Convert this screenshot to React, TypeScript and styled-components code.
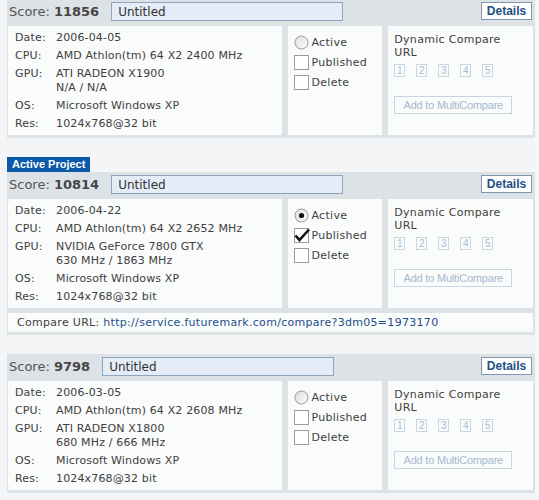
import React from 'react'
import styled, { createGlobalStyle } from 'styled-components'

const GlobalStyle = createGlobalStyle`
  html, body {
    margin: 0;
    padding: 0;
    background: #f3f5f6;
  }
`

const Page = styled.div`
  padding: 0 0 0 7px;
  margin-top: -1px;
  font-family: 'DejaVu Sans', Verdana, sans-serif;
  font-size: 11px;
  letter-spacing: 0.15px;
  color: #404040;
`

const Block = styled.section`
  margin-bottom: 19px;
`

const Tab = styled.div`
  display: inline-block;
  height: 15px;
  line-height: 15px;
  padding: 0 5px;
  background: #0b5aa9;
  color: #fff;
  font-family: 'Liberation Sans', Arial, sans-serif;
  font-weight: bold;
  font-size: 11px;
  letter-spacing: 0;
  vertical-align: top;
`

const Panel = styled.div`
  width: 528px;
  box-sizing: border-box;
  background: #dde2e6;
  padding: 0 2px 3px 1px;
`

const Header = styled.div`
  display: flex;
  align-items: flex-start;
  height: 27px;
  padding: 3px 0 0 1px;
  box-sizing: border-box;
`

const Score = styled.div`
  font-size: 13px;
  line-height: 20px;
  letter-spacing: 0;
  color: #555;
  white-space: nowrap;
  b {
    color: #464646;
  }
`

const Title = styled.input`
  margin-left: 12px;
  width: 232px;
  height: 19px;
  box-sizing: border-box;
  border: 1px solid #8fa5bc;
  background: #e4edf7;
  padding: 0 6px;
  font-family: 'DejaVu Sans', Verdana, sans-serif;
  font-size: 12px;
  color: #333;
  outline: none;
`

const DetailsButton = styled.button`
  margin-left: auto;
  margin-right: 1px;
  width: 51px;
  height: 18px;
  padding: 0;
  background: #fff;
  border: 1px solid #7e97b1;
  color: #1e4f86;
  font-family: 'Liberation Sans', Arial, sans-serif;
  font-weight: bold;
  font-size: 12px;
  cursor: pointer;
`

const Cells = styled.div`
  display: flex;
  gap: 6px;
`

const Cell = styled.div<{ $w: number }>`
  width: ${p => p.$w}px;
  box-sizing: border-box;
  background: #fafbfb;
`

const Specs = styled(Cell)`
  padding: 5px 0 4px 7px;
`

const SpecRow = styled.div`
  display: flex;
  line-height: 14px;
  margin-bottom: 4px;
  &:last-child {
    margin-bottom: 0;
  }
`

const SpecLabel = styled.span`
  width: 41px;
  flex-shrink: 0;
`

const Flags = styled(Cell)`
  padding: 6px 0 0 6px;
`

const Flag = styled.label`
  display: flex;
  align-items: center;
  height: 20px;
  gap: 2px;
  letter-spacing: 0.3px;
`

const Compare = styled(Cell)`
  padding: 7px 0 0 6px;
`

const CompareTitle = styled.div`
  line-height: 13px;
  letter-spacing: 0.3px;
`

const Slots = styled.div`
  display: flex;
  gap: 11px;
  margin-top: 5px;
`

const Slot = styled.span`
  width: 11px;
  height: 13px;
  box-sizing: border-box;
  border: 1px solid #cdd6df;
  color: #a9bfd5;
  font-family: 'Liberation Sans', Arial, sans-serif;
  font-size: 10px;
  line-height: 11px;
  text-align: center;
`

const MultiButton = styled.button`
  margin-top: 19px;
  width: 118px;
  height: 18px;
  padding: 0;
  background: #fafbfb;
  border: 1px solid #cbd4de;
  color: #a4bad1;
  font-family: 'Liberation Sans', Arial, sans-serif;
  font-size: 11px;
  letter-spacing: -0.2px;
`

const UrlRow = styled.div`
  margin-top: 5px;
  height: 19px;
  line-height: 19px;
  padding-left: 9px;
  background: #fafbfb;
  font-size: 11px;
  letter-spacing: 0.3px;
  a {
    color: #1c4f8c;
    text-decoration: none;
  }
`

const Radio = ({ on }: { on: boolean }) => (
  <svg width="15" height="15" viewBox="0 0 15 15">
    <defs>
      <linearGradient id="rg" x1="0" y1="0" x2="1" y2="1">
        <stop offset="0" stopColor="#dcdcdc" />
        <stop offset="1" stopColor="#ffffff" />
      </linearGradient>
    </defs>
    <circle cx="7.5" cy="7.5" r="6.5" fill="url(#rg)" stroke="#9c9c9c" />
    {on && <circle cx="7.5" cy="7.5" r="2.6" fill="#111" />}
  </svg>
)

const Check = ({ on }: { on: boolean }) => (
  <svg width="15" height="15" viewBox="0 0 15 15" style={{ overflow: 'visible' }}>
    <rect x="0.5" y="0.5" width="14" height="14" fill="#fff" stroke="#9c9c9c" />
    {on && (
      <path d="M1.5 7.5 L5.5 12 L15 1.5" fill="none" stroke="#111" strokeWidth="2.6" />
    )}
  </svg>
)

interface Project {
  score: string
  date: string
  cpu: string
  gpu: string
  clocks: string
  active?: boolean
  published?: boolean
  url?: string
}

const projects: Project[] = [
  {
    score: '11856',
    date: '2006-04-05',
    cpu: 'AMD Athlon(tm) 64 X2 2400 MHz',
    gpu: 'ATI RADEON X1900',
    clocks: 'N/A / N/A',
  },
  {
    score: '10814',
    date: '2006-04-22',
    cpu: 'AMD Athlon(tm) 64 X2 2652 MHz',
    gpu: 'NVIDIA GeForce 7800 GTX',
    clocks: '630 MHz / 1863 MHz',
    active: true,
    published: true,
    url: 'http://service.futuremark.com/compare?3dm05=1973170',
  },
  {
    score: '9798',
    date: '2006-03-05',
    cpu: 'AMD Athlon(tm) 64 X2 2608 MHz',
    gpu: 'ATI RADEON X1800',
    clocks: '680 MHz / 666 MHz',
  },
]

const ProjectPanel = ({ p }: { p: Project }) => (
  <Block>
    {p.active && <Tab>Active Project</Tab>}
    <Panel>
      <Header>
        <Score>
          Score: <b>{p.score}</b>
        </Score>
        <Title defaultValue="Untitled" />
        <DetailsButton>Details</DetailsButton>
      </Header>
      <Cells>
        <Specs $w={275}>
          <SpecRow>
            <SpecLabel>Date:</SpecLabel>
            {p.date}
          </SpecRow>
          <SpecRow>
            <SpecLabel>CPU:</SpecLabel>
            {p.cpu}
          </SpecRow>
          <SpecRow>
            <SpecLabel>GPU:</SpecLabel>
            <span>
              {p.gpu}
              <br />
              {p.clocks}
            </span>
          </SpecRow>
          <SpecRow>
            <SpecLabel>OS:</SpecLabel>
            Microsoft Windows XP
          </SpecRow>
          <SpecRow>
            <SpecLabel>Res:</SpecLabel>
            1024x768@32 bit
          </SpecRow>
        </Specs>
        <Flags $w={94}>
          <Flag>
            <Radio on={!!p.active} />
            Active
          </Flag>
          <Flag>
            <Check on={!!p.published} />
            Published
          </Flag>
          <Flag>
            <Check on={false} />
            Delete
          </Flag>
        </Flags>
        <Compare $w={145}>
          <CompareTitle>
            Dynamic Compare
            <br />
            URL
          </CompareTitle>
          <Slots>
            {[1, 2, 3, 4, 5].map(n => (
              <Slot key={n}>{n}</Slot>
            ))}
          </Slots>
          <MultiButton>Add to MultiCompare</MultiButton>
        </Compare>
      </Cells>
      {p.url && (
        <UrlRow>
          Compare URL: <a href="#">{p.url}</a>
        </UrlRow>
      )}
    </Panel>
  </Block>
)

const App: React.FC = () => (
  <>
    <GlobalStyle />
    <Page>
      {projects.map(p => (
        <ProjectPanel key={p.score} p={p} />
      ))}
    </Page>
  </>
)

export default App
